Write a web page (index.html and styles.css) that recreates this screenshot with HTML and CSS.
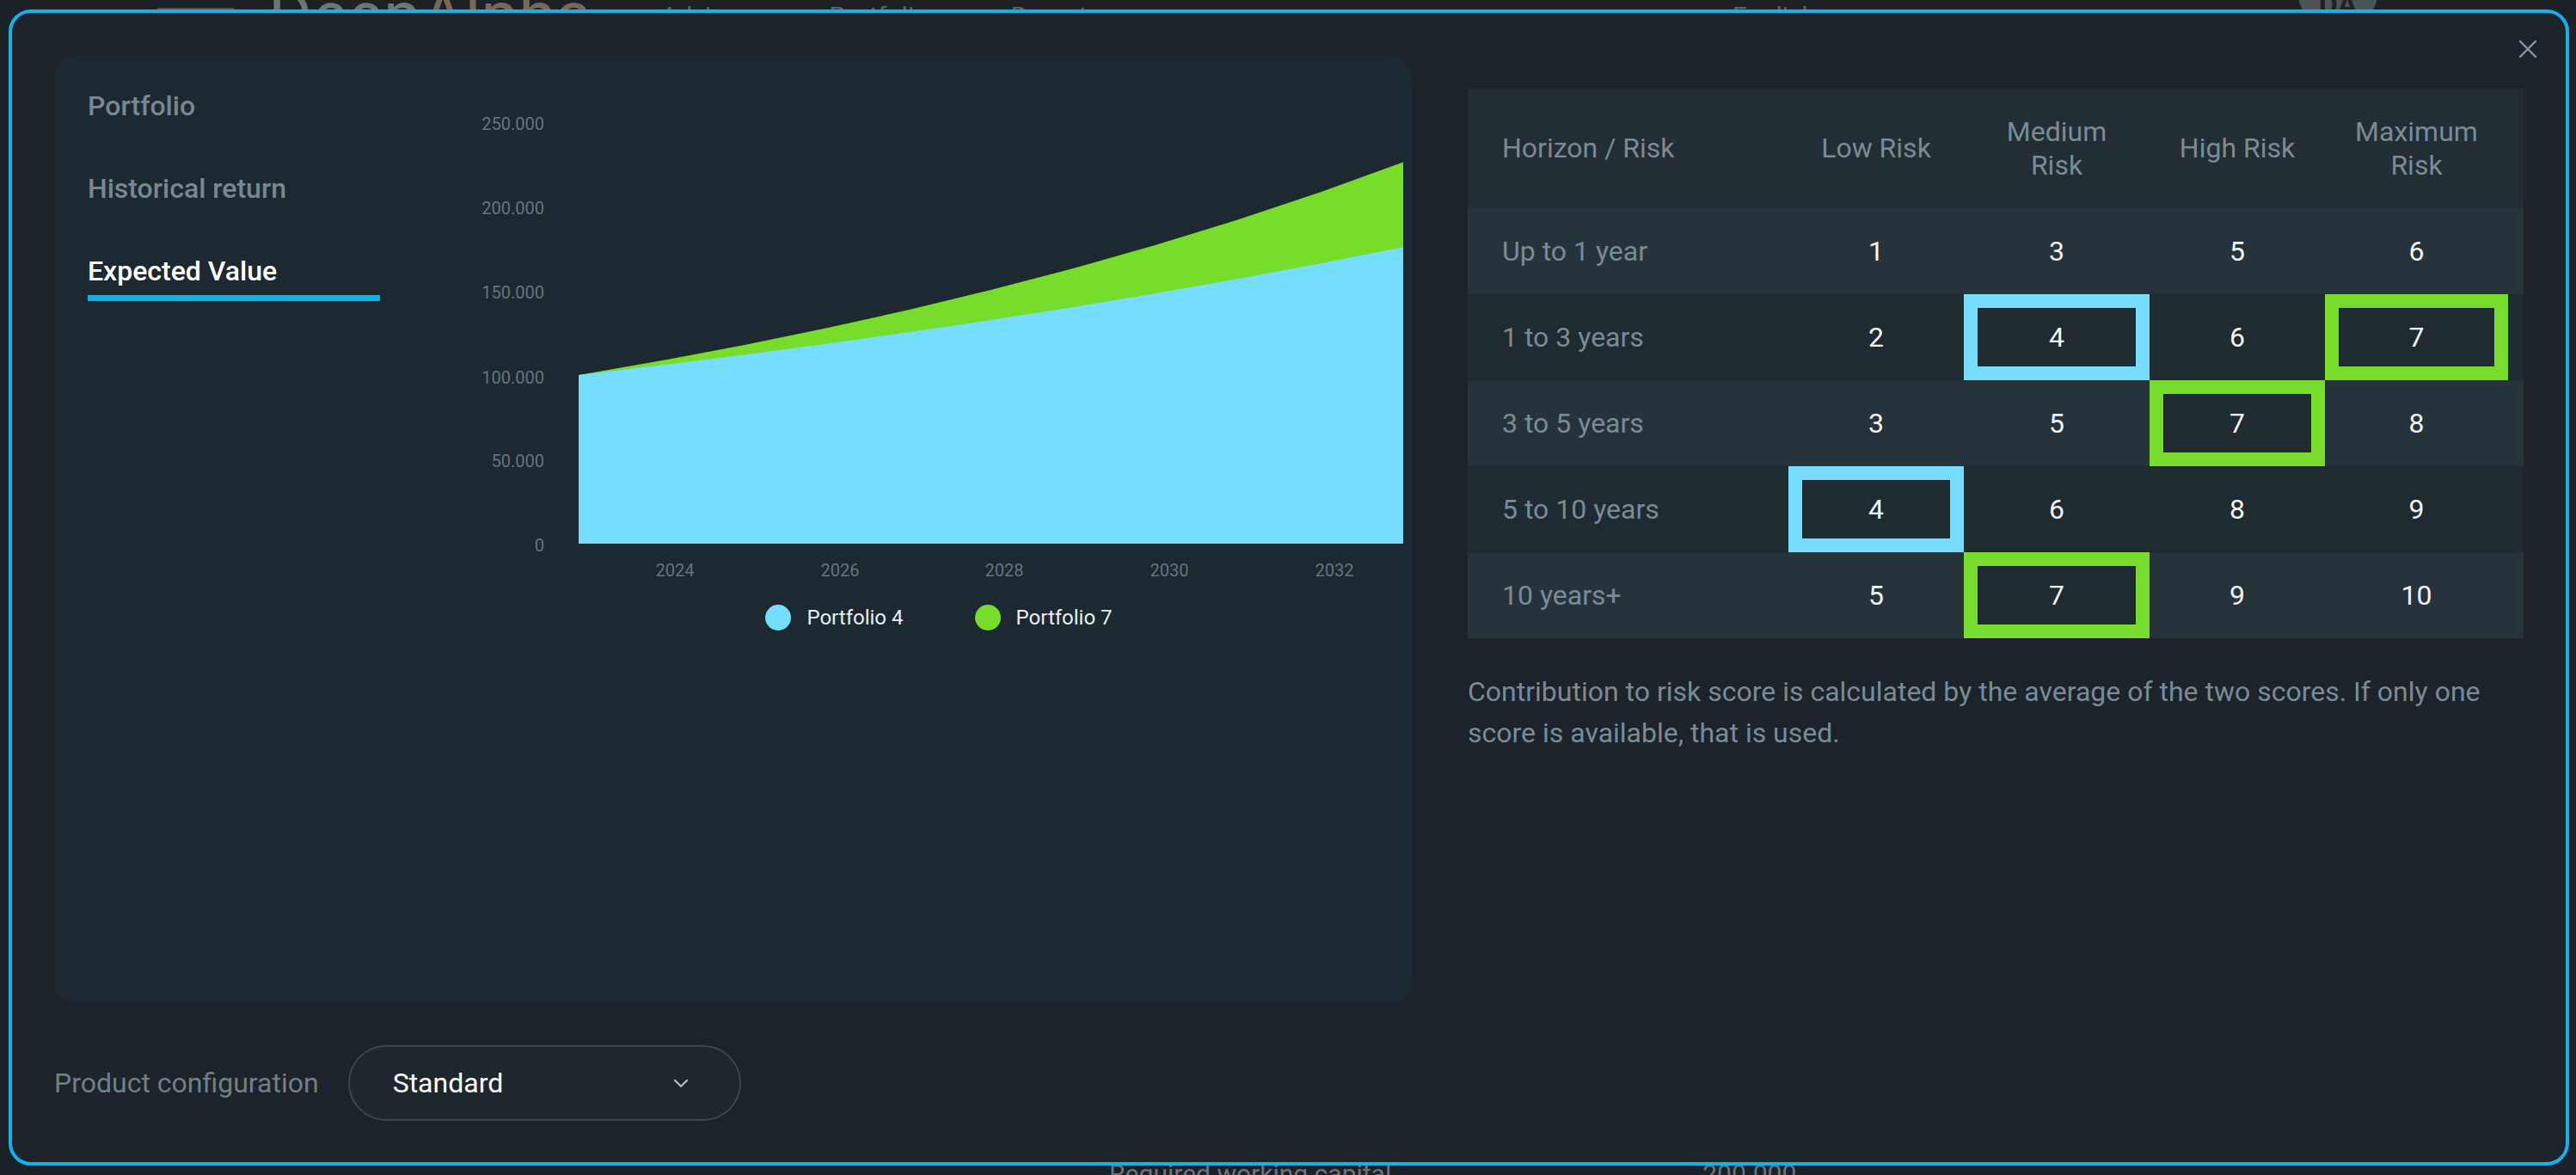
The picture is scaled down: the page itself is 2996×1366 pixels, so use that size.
FILE: index.html
```html
<!DOCTYPE html>
<html lang="en">
<head>
    <meta charset="UTF-8">
    <meta name="viewport" content="width=device-width, initial-scale=1.0">
    <title>DeepAlpha - Risk profile</title>
    <link rel="stylesheet" href="styles.css">
</head>
<body>
    <!-- page behind the dialog -->
    <header class="topbar">
        <div class="burger"><span></span><span></span><span></span></div>
        <div class="brand">Deep<span>Alpha</span></div>
        <ul class="menu">
            <li>Advisory</li>
            <li>Portfolios</li>
            <li>Reports</li>
        </ul>
        <div class="lang">English</div>
        <div class="avatar">DA</div>
    </header>
    <div class="page-row">
        <span>Required working capital</span>
        <span>200.000</span>
    </div>

    <!-- Risk profile dialog -->
    <div class="modal">
        <button class="close" aria-label="Close">
            <svg width="22" height="22" viewBox="0 0 22 22">
                <path d="M2 2 L20 20 M20 2 L2 20" stroke="#8798a2" stroke-width="2.4" stroke-linecap="round" fill="none"/>
            </svg>
        </button>

        <div class="modal-body">
            <section class="card">
                <nav class="tabs">
                    <a class="tab">Portfolio</a>
                    <a class="tab">Historical return</a>
                    <a class="tab active">Expected Value</a>
                </nav>

                <div class="chart">
                    <svg class="chart-svg" width="1080" height="580" viewBox="0 0 1080 580">
                        <g class="axis" text-anchor="end">
                            <text x="73" y="46">250.000</text>
                            <text x="73" y="144">200.000</text>
                            <text x="73" y="242">150.000</text>
                            <text x="73" y="341">100.000</text>
                            <text x="73" y="438">50.000</text>
                            <text x="73" y="536">0</text>
                        </g>
                        <!-- Portfolio 7 -->
                        <path fill="#78dc2a" d="M113,527 L113,331 L208.9,314.3 L304.8,296.2 L400.7,276.6 L496.6,255.3 L592.5,232.1 L688.4,207.1 L784.3,179.8 L880.2,150.3 L976.1,118.2 L1072,83.4 L1072,527 Z"/>
                        <!-- Portfolio 4 -->
                        <path fill="#75defe" d="M113,527 L113,331 L208.9,319.6 L304.8,307.6 L400.7,294.8 L496.6,281.3 L592.5,267.0 L688.4,251.9 L784.3,236.0 L880.2,219.1 L976.1,201.2 L1072,182.2 L1072,527 Z"/>
                        <g class="axis" text-anchor="middle">
                            <text x="225" y="565">2024</text>
                            <text x="417" y="565">2026</text>
                            <text x="608" y="565">2028</text>
                            <text x="800" y="565">2030</text>
                            <text x="992" y="565">2032</text>
                        </g>
                    </svg>
                    <div class="legend">
                        <div class="legend-item"><span class="dot blue"></span>Portfolio 4</div>
                        <div class="legend-item"><span class="dot green"></span>Portfolio 7</div>
                    </div>
                </div>
            </section>

            <section class="risk">
                <div class="risk-table">
                    <div class="risk-row head">
                        <div class="cell label">Horizon / Risk</div>
                        <div class="cell">Low Risk</div>
                        <div class="cell">Medium Risk</div>
                        <div class="cell">High Risk</div>
                        <div class="cell">Maximum Risk</div>
                        <div></div>
                    </div>
                    <div class="risk-row light">
                        <div class="cell label">Up to 1 year</div>
                        <div class="cell">1</div>
                        <div class="cell">3</div>
                        <div class="cell">5</div>
                        <div class="cell">6</div>
                        <div></div>
                    </div>
                    <div class="risk-row dark">
                        <div class="cell label">1 to 3 years</div>
                        <div class="cell">2</div>
                        <div class="cell hl-blue">4</div>
                        <div class="cell">6</div>
                        <div class="cell hl-green">7</div>
                        <div></div>
                    </div>
                    <div class="risk-row light">
                        <div class="cell label">3 to 5 years</div>
                        <div class="cell">3</div>
                        <div class="cell">5</div>
                        <div class="cell hl-green">7</div>
                        <div class="cell">8</div>
                        <div></div>
                    </div>
                    <div class="risk-row dark">
                        <div class="cell label">5 to 10 years</div>
                        <div class="cell hl-blue">4</div>
                        <div class="cell">6</div>
                        <div class="cell">8</div>
                        <div class="cell">9</div>
                        <div></div>
                    </div>
                    <div class="risk-row light">
                        <div class="cell label">10 years+</div>
                        <div class="cell">5</div>
                        <div class="cell hl-green">7</div>
                        <div class="cell">9</div>
                        <div class="cell">10</div>
                        <div></div>
                    </div>
                </div>
                <p class="note">Contribution to risk score is calculated by the average of the two scores. If only one score is available, that is used.</p>
            </section>
        </div>

        <div class="config">
            <span class="config-label">Product configuration</span>
            <div class="select">
                <span>Standard</span>
                <svg width="18" height="11" viewBox="0 0 18 11">
                    <path d="M2 2 L9 9 L16 2" stroke="#a9b4bb" stroke-width="2.4" fill="none" stroke-linecap="round" stroke-linejoin="round"/>
                </svg>
            </div>
        </div>
    </div>
</body>
</html>
```

FILE: styles.css
```css
/* Base */
* {
    margin: 0;
    padding: 0;
    box-sizing: border-box;
}

body {
    height: 100vh;
    overflow: hidden;
    display: flex;
    flex-direction: column;
    background-color: #1a2127;
    font-family: Roboto, "Liberation Sans", sans-serif;
}

/* Page behind the dialog */
.topbar {
    display: flex;
    align-items: flex-start;
    height: 76px;
    margin-top: -19px;
    padding-left: 182px;
}

.burger {
    display: flex;
    flex-direction: column;
    gap: 10px;
    width: 91px;
    margin-top: 6px;
}

.burger span {
    height: 12px;
    background-color: #5b4e40;
    border-radius: 3px;
}

.brand {
    margin-left: 39px;
    font-size: 78px;
    line-height: 76px;
    color: #6c757b;
}

.brand span {
    color: #76685a;
}

.menu {
    list-style: none;
    display: flex;
    gap: 80px;
    margin-left: 80px;
    margin-top: 20px;
    font-size: 30px;
    color: #59636a;
}

.lang {
    margin-left: auto;
    margin-top: 20px;
    font-size: 30px;
    color: #59636a;
}

.avatar {
    width: 94px;
    height: 94px;
    margin: -40px 230px 0 560px;
    border-radius: 50%;
    background-color: #4b5459;
    color: #1c2227;
    font-weight: 700;
    font-size: 34px;
    display: flex;
    align-items: flex-end;
    justify-content: center;
    padding-bottom: 10px;
}

.page-row {
    margin-top: auto;
    margin-bottom: -19px;
    height: 40px;
    display: flex;
    gap: 362px;
    padding-left: 1290px;
    font-size: 30px;
    line-height: 40px;
    color: #6b757b;
}

/* Dialog */
.modal {
    position: fixed;
    top: 11px;
    left: 10px;
    right: 8px;
    bottom: 11px;
    display: flex;
    flex-direction: column;
    gap: 49px;
    padding: 50px 49px 48px 49px;
    background-color: #1c232a;
    border: 4px solid #15b1e7;
    border-radius: 26px;
}

.close {
    position: absolute;
    top: 31px;
    right: 33px;
    width: 22px;
    height: 22px;
    border: none;
    background: none;
    cursor: pointer;
}

.close svg {
    display: block;
}

.modal-body {
    flex: 1;
    min-height: 0;
    display: grid;
    grid-template-columns: 1fr 1228px;
    gap: 65px;
}

/* Chart card */
.card {
    display: flex;
    align-items: flex-start;
    padding: 39px 0 0 39px;
    background-color: #1d2930;
    border-radius: 24px;
}

.tabs {
    width: 340px;
    display: flex;
    flex-direction: column;
    gap: 58px;
}

.tab {
    font-size: 32px;
    line-height: 38px;
    font-weight: 500;
    color: #778893;
    cursor: pointer;
}

.tab.active {
    color: #ffffff;
    padding-bottom: 9px;
    border-bottom: 7px solid #0db4ea;
}

.chart {
    margin-left: 118px;
    margin-top: 1px;
    width: 1080px;
}

.chart-svg {
    display: block;
}

.axis text {
    font-family: Roboto, "Liberation Sans", sans-serif;
    font-size: 20px;
    fill: #66747d;
}

.legend {
    display: flex;
    justify-content: center;
    gap: 83px;
    margin-top: 18px;
    padding-right: 16px;
}

.legend-item {
    display: flex;
    align-items: center;
    gap: 18px;
    font-size: 24px;
    line-height: 30px;
    color: #e8edf0;
}

.dot {
    width: 30px;
    height: 30px;
    border-radius: 50%;
}

.dot.blue {
    background-color: #75defe;
}

.dot.green {
    background-color: #78dc2a;
}

/* Risk matrix */
.risk {
    padding-top: 38px;
}

.risk-row {
    display: grid;
    grid-template-columns: 373px 204px 216px 204px 213px 1fr;
    height: 100px;
}

.risk-row.head {
    height: 139px;
    background-color: #222d34;
}

.risk-row.light {
    background-color: #27333a;
}

.risk-row.dark {
    background-color: #1f2a31;
}

.cell {
    display: flex;
    align-items: center;
    justify-content: center;
    text-align: center;
    font-size: 32px;
    line-height: 39px;
    color: #f2f5f7;
}

.head .cell {
    padding: 0 28px;
    color: #7a8b95;
}

.cell.label {
    justify-content: flex-start;
    text-align: left;
    padding-left: 40px;
    color: #7a8b95;
}

.hl-blue {
    background-color: #1f2a31;
    box-shadow: inset 0 0 0 16px #76ddff;
}

.hl-green {
    background-color: #1f2a31;
    box-shadow: inset 0 0 0 16px #77dc2b;
}

.note {
    margin-top: 38px;
    font-size: 32px;
    line-height: 48px;
    color: #7a8b95;
}

/* Product configuration */
.config {
    display: flex;
    align-items: center;
    gap: 34px;
    height: 88px;
}

.config-label {
    font-size: 32px;
    color: #6f8089;
}

.select {
    width: 457px;
    height: 88px;
    display: flex;
    align-items: center;
    justify-content: space-between;
    padding: 0 59px 0 50px;
    border: 2px solid #3a4750;
    border-radius: 44px;
    background-color: #1f272e;
    font-size: 32px;
    color: #ffffff;
}

.select svg {
    display: block;
}
```
